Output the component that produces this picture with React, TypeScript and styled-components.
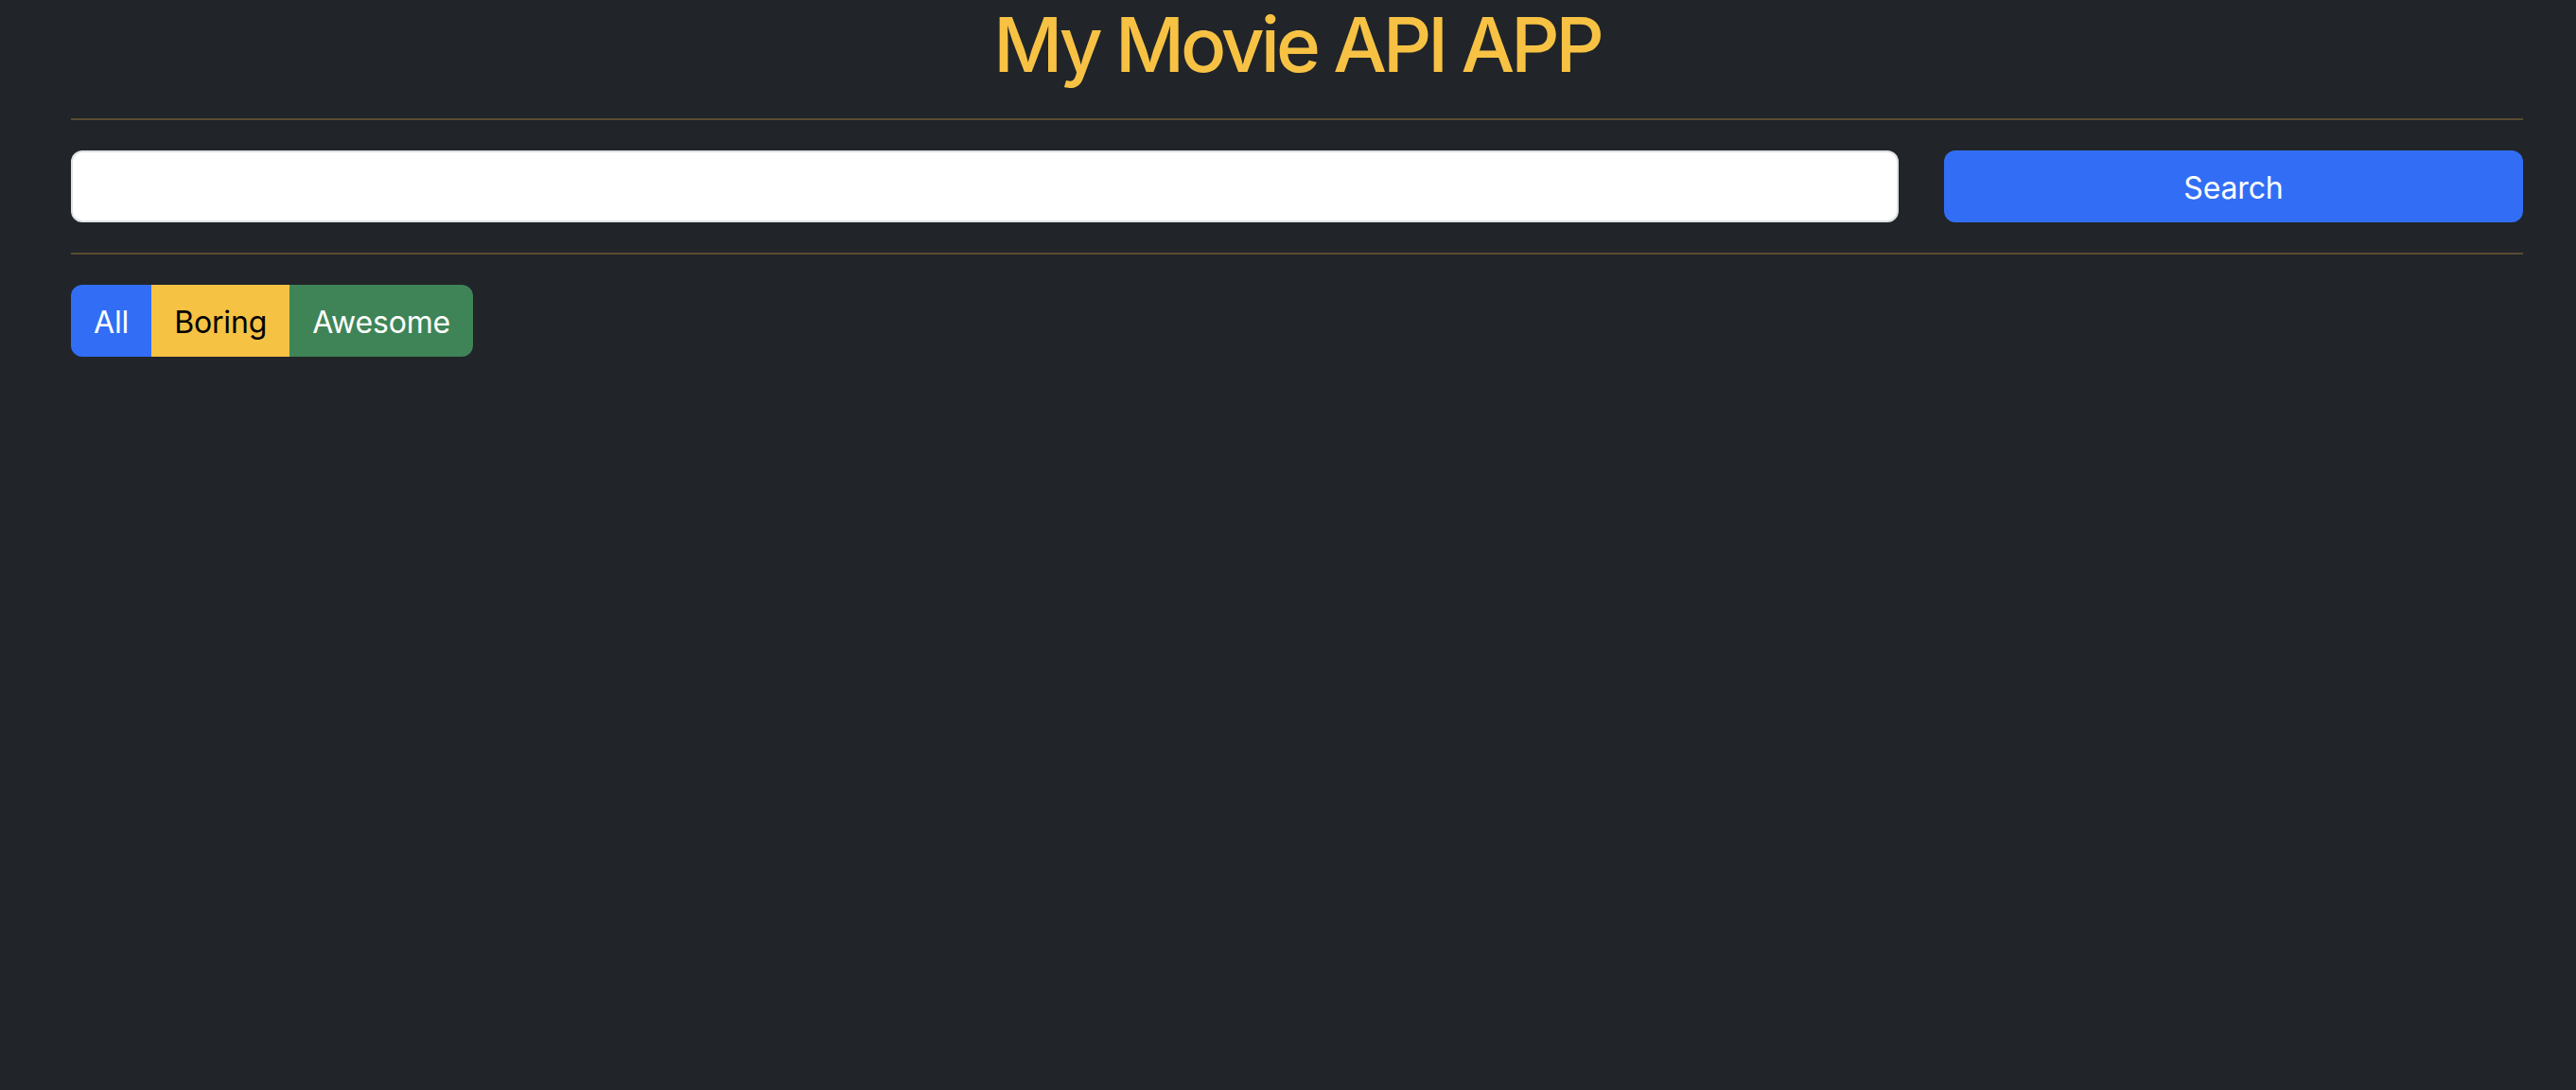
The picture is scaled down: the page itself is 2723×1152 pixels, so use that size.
import React from "react";
import styled, { createGlobalStyle } from "styled-components";

const Global = createGlobalStyle`
  html, body { margin: 0; padding: 0; background: #212529; }
  body { font-family: Inter, "Noto Sans", sans-serif; }
  * { box-sizing: border-box; }
`;

const Page = styled.div`
  min-height: 1152px;
  background: #212529;
  padding: 0 56px 0 75px;
`;

const Title = styled.h1`
  margin: 0;
  text-align: center;
  color: #f7c244;
  font-size: 80px;
  font-weight: 500;
  line-height: 93px;
  letter-spacing: -4px;
`;

const Rule = styled.hr`
  margin: 32px 0;
  border: 0;
  border-top: 2px solid #584c30;
  opacity: 1;
`;

const SearchRow = styled.div`
  display: grid;
  grid-template-columns: 1fr 612px;
  column-gap: 48px;
`;

const Input = styled.input`
  height: 76px;
  border: 2px solid #dee2e6;
  border-radius: 12px;
  background: #fff;
  font-size: 32px;
  padding: 12px 24px;
  font-family: inherit;
  outline: none;
`;

const Btn = styled.button<{ $bg: string; $fg: string }>`
  height: 76px;
  border: 0;
  background: ${(p) => p.$bg};
  color: ${(p) => p.$fg};
  font-family: inherit;
  font-size: 32px;
  line-height: 48px;
  letter-spacing: -0.15px;
  padding: 14px 24px 10px;
  cursor: pointer;
`;

const SearchBtn = styled(Btn)`
  border-radius: 12px;
`;

const Group = styled.div`
  display: inline-flex;
  border-radius: 12px;
  overflow: hidden;
`;

export default function App() {
  return (
    <>
      <Global />
      <Page>
        <Title>My Movie API APP</Title>
        <Rule />
        <SearchRow>
          <Input type="text" />
          <SearchBtn $bg="#326ef5" $fg="#fff">Search</SearchBtn>
        </SearchRow>
        <Rule />
        <Group>
          <Btn $bg="#326ef5" $fg="#fff">All</Btn>
          <Btn $bg="#f6c244" $fg="#000">Boring</Btn>
          <Btn $bg="#3f8457" $fg="#fff">Awesome</Btn>
        </Group>
      </Page>
    </>
  );
}
